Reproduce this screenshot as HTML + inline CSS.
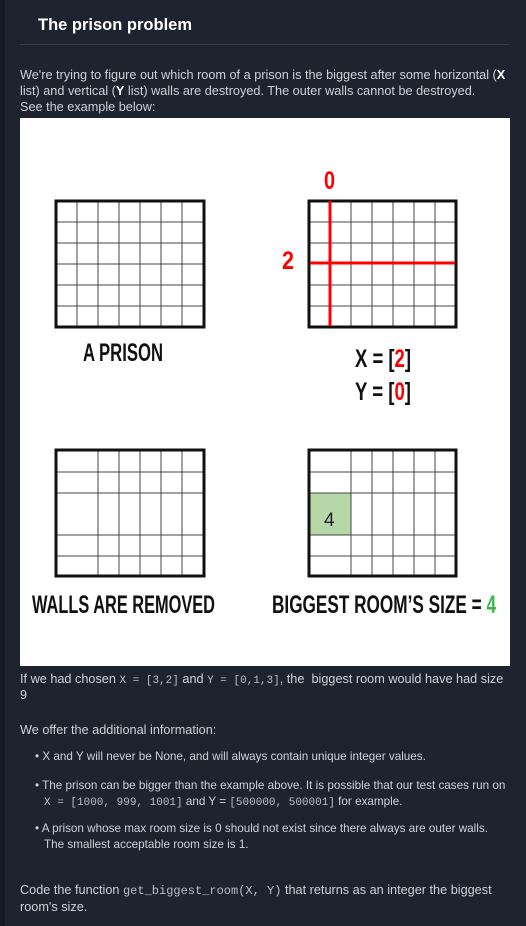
<!DOCTYPE html>
<html><head><meta charset="utf-8"><style>
body{margin:0;width:526px;height:926px;background:#1e2330;position:relative;overflow:hidden;font-family:"Liberation Sans",sans-serif;color:#cdd1d8}
.l{position:absolute;white-space:nowrap;font-size:12.7px;line-height:16px}
.s{font-size:11.7px}
code{font-family:"Liberation Mono",monospace;font-size:11px;color:#b9bec8}
b{color:#fff}
</style></head><body>
<div style="position:absolute;left:0;top:0;width:5px;height:926px;background:#151a26"></div>
<div class="l" style="left:38px;top:15px;font-size:16.5px;line-height:20px;font-weight:bold;color:#fff">The prison problem</div>
<div style="position:absolute;left:20px;top:44px;width:490px;height:1px;background:#343a48"></div>
<div class="l" style="left:20px;top:67px">We're trying to figure out which room of a prison is the biggest after some horizontal (<b>X</b></div>
<div class="l" style="left:20px;top:83px">list) and vertical (<b>Y</b> list) walls are destroyed. The outer walls cannot be destroyed.</div>
<div class="l" style="left:20px;top:99px">See the example below:</div>
<svg style="position:absolute;left:20px;top:118px" width="490" height="548" viewBox="20 118 490 548">
<rect x="20" y="118" width="490" height="548" fill="#fff"/>
<g stroke="#444" stroke-width="1">
<path d="M77 201V327M98 201V327M119 201V327M140 201V327M161 201V327M182 201V327M56 222H204M56 243H204M56 264H204M56 285H204M56 306H204"/>
<path d="M330 201V327M351 201V327M372 201V327M393 201V327M414 201V327M435 201V327M309 222H456M309 243H456M309 264H456M309 285H456M309 306H456"/>
<path d="M98 450V576M119 450V576M140 450V576M161 450V576M182 450V576M56 472H204M56 493H204M56 535H204M56 556H204"/>
<path d="M351 450V576M372 450V576M393 450V576M414 450V576M435 450V576M309 472H456M309 493H456M309 535H456M309 556H456"/>
</g>
<rect x="310" y="493" width="41" height="42" fill="#b6d7a8" stroke="#444"/>
<g fill="none" stroke="#111" stroke-width="3">
<rect x="56" y="201" width="148" height="126"/><rect x="309" y="201" width="147" height="126"/>
<rect x="56" y="450" width="148" height="126"/><rect x="309" y="450" width="147" height="126"/>
</g>
<path d="M330 201V326M310 263H455" stroke="#f00" stroke-width="3"/>
<g font-family="Liberation Sans,sans-serif" font-weight="bold" font-size="25">
<text x="324" y="189" fill="#f00" textLength="11" lengthAdjust="spacingAndGlyphs">0</text>
<text x="282" y="269" fill="#f00" textLength="12" lengthAdjust="spacingAndGlyphs">2</text>
<text x="83" y="361" fill="#111" textLength="80" lengthAdjust="spacingAndGlyphs">A PRISON</text>
<text x="355" y="367" fill="#111" textLength="56" lengthAdjust="spacingAndGlyphs">X = [<tspan fill="#f00">2</tspan>]</text>
<text x="355" y="400" fill="#111" textLength="56" lengthAdjust="spacingAndGlyphs">Y = [<tspan fill="#f00">0</tspan>]</text>
<text x="32" y="613" fill="#111" textLength="183" lengthAdjust="spacingAndGlyphs">WALLS ARE REMOVED</text>
<text x="272" y="613" fill="#111" textLength="224" lengthAdjust="spacingAndGlyphs">BIGGEST ROOM’S SIZE = <tspan fill="#3bb54a">4</tspan></text>
</g>
<text x="324" y="526" font-family="Liberation Sans,sans-serif" font-size="19" fill="#222">4</text>
</svg>
<div class="l" style="left:20px;top:671px">If we had chosen <code>X = [3,2]</code> and <code>Y = [0,1,3]</code>, the &nbsp;biggest room would have had size</div>
<div class="l" style="left:20px;top:687px">9</div>
<div class="l" style="left:20px;top:722px">We offer the additional information:</div>
<div class="l s" style="left:35px;top:749px">• X and Y will never be None, and will always contain unique integer values.</div>
<div class="l s" style="left:35px;top:778px">• The prison can be bigger than the example above. It is possible that our test cases run on</div>
<div class="l s" style="left:44px;top:794px"><code>X = [1000, 999, 1001]</code> and Y = <code>[500000, 500001]</code> for example.</div>
<div class="l s" style="left:35px;top:821px">• A prison whose max room size is 0 should not exist since there always are outer walls.</div>
<div class="l s" style="left:44px;top:837px">The smallest acceptable room size is 1.</div>
<div class="l" style="left:20px;top:882px">Code the function <code style="font-size:12px">get_biggest_room(X, Y)</code> that returns as an integer the biggest</div>
<div class="l" style="left:20px;top:899px">room's size.</div>
</body></html>
